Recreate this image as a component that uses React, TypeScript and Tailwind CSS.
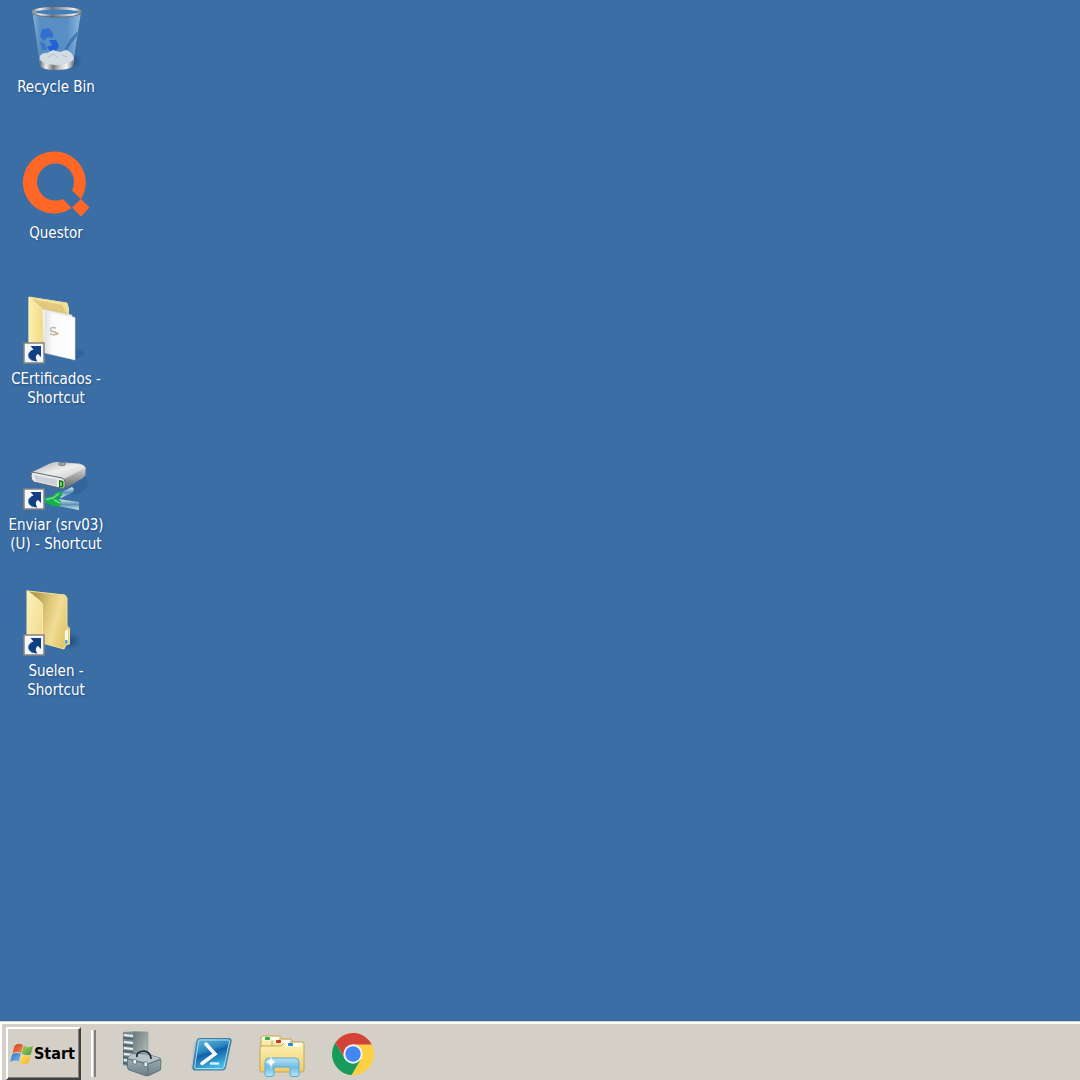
import type { ReactNode } from 'react';

function ShortcutArrow() {
  return (
    <g>
      <rect x="24" y="51" width="20" height="20" fill="#f4f8fb" stroke="#85837f" strokeWidth="1.5" />
      <path d="M30.500 54 H41 V65 L38 62 C35.500 63.500 35 66 37.500 69.500 C31 69 27.500 66 28.500 62 C29.200 59.500 31 58.500 33.500 57.500 Z" fill="#123f83" />
      <path d="M33 69 C29.500 67.500 28 65 28.500 62 C29 60.500 30 59.500 31.500 58.500" fill="none" stroke="#5b86bd" strokeWidth=".8" />
    </g>
  );
}

function RecycleBinIcon() {
  return (
    <svg viewBox="0 0 112 78" className="h-[78px] w-28" aria-hidden="true">
      <defs>
        <linearGradient id="binGlass" x1="0" x2="1" y1="0" y2="0">
          <stop offset="0" stopColor="#b9dcf5" stopOpacity=".65" />
          <stop offset=".15" stopColor="#79b0e0" stopOpacity=".5" />
          <stop offset=".7" stopColor="#74aee2" stopOpacity=".5" />
          <stop offset="1" stopColor="#b9dcf5" stopOpacity=".7" />
        </linearGradient>
        <linearGradient id="binBase" x1="0" x2="1" y1="0" y2="0">
          <stop offset="0" stopColor="#62676c" />
          <stop offset=".2" stopColor="#f2f2f2" />
          <stop offset=".4" stopColor="#77797b" />
          <stop offset=".6" stopColor="#c9cbcc" />
          <stop offset=".8" stopColor="#f5f5f5" />
          <stop offset="1" stopColor="#777b80" />
        </linearGradient>
        <linearGradient id="binRim" x1="0" x2="1" y1="0" y2="0">
          <stop offset="0" stopColor="#8d9194" />
          <stop offset=".15" stopColor="#e9ebec" />
          <stop offset=".4" stopColor="#6f7376" />
          <stop offset=".65" stopColor="#b5b8ba" />
          <stop offset=".85" stopColor="#f1f2f2" />
          <stop offset="1" stopColor="#777b80" />
        </linearGradient>
        <radialGradient id="binShadow">
          <stop offset="0" stopColor="#1f4a7d" stopOpacity=".8" />
          <stop offset="1" stopColor="#1f4a7d" stopOpacity="0" />
        </radialGradient>
      </defs>
      <ellipse cx="70" cy="61" rx="13" ry="9" fill="url(#binShadow)" />
      <path d="M32.500 12 L40 64 Q56 72 73 64 L81 12 Z" fill="url(#binGlass)" />
      <path d="M65 49 Q70 38 78 31 L77 36 Q71 43 67 50 Z" fill="#2c67a8" opacity=".7" />
      <path d="M42 29 L49 28 L53 33 L53 38 L48 37 L44 41 L40 36 Z" fill="#2867cf" opacity=".75" />
      <path d="M49 40 L56 40 L59 46 L56 51 L50 51 L47 47 L52 45 Z" fill="#1c5cdc" opacity=".9" />
      <path d="M40 42 L45 43 L47 50 L42 50 Z" fill="#2868c9" opacity=".6" />
      <path d="M39.500 58 Q40 53 47 53 L53 50 L60 52 L66 50 Q73 52 74 59 L73 64 Q56 70 40 64 Z" fill="#dfe4e7" opacity=".9" />
      <path d="M48 57 L54 54 L58 58 M62 55 L67 57" fill="none" stroke="#b9c3ca" strokeWidth="1" />
      <path d="M39.500 59 Q42 64.500 56 65 Q71 64.500 73.500 59 L73 66 Q70 70 56 70 Q42 70 40 66 Z" fill="url(#binBase)" />
      <ellipse cx="57" cy="12" rx="24" ry="3.800" fill="#3f7fbe" stroke="url(#binRim)" strokeWidth="2.500" />
      <path d="M33 13.500 Q38 17 57 17 Q76 17 81 13.500" fill="none" stroke="#4e555b" strokeWidth=".7" />
    </svg>
  );
}

function QuestorIcon() {
  return (
    <svg viewBox="0 0 112 78" className="h-[78px] w-28" aria-hidden="true">
      <path
        fillRule="evenodd"
        d="M54.500 5.500 A31 31 0 0 1 81 53 L72 44.500 A18.500 18.500 0 1 0 63 53 L71.500 62 A31 31 0 1 1 54.500 5.500 Z"
        fill="#ff6727"
      />
      <path d="M81 53 L89.500 61.500 L81 70.500 L72 61.500 Z" fill="#ff6727" />
    </svg>
  );
}

function CertificatesIcon() {
  return (
    <svg viewBox="0 0 112 78" className="h-[78px] w-28" aria-hidden="true">
      <defs>
        <linearGradient id="certBack" x1="0" x2="0" y1="0" y2="1">
          <stop offset="0" stopColor="#f6e7a3" />
          <stop offset="1" stopColor="#d9bb68" />
        </linearGradient>
        <linearGradient id="certFront" x1="0" x2="1" y1="0" y2="0">
          <stop offset="0" stopColor="#fcf0ae" />
          <stop offset="1" stopColor="#efd988" />
        </linearGradient>
        <linearGradient id="certPage" x1="0" x2="1" y1="0" y2="0">
          <stop offset="0" stopColor="#e3e1de" />
          <stop offset=".25" stopColor="#fafafa" />
          <stop offset="1" stopColor="#ffffff" />
        </linearGradient>
      </defs>
      <path d="M74 55 L85 61 L76 68 L68 68 Z" fill="#2d5f97" opacity=".7" />
      <path d="M29 5 L67 11 L68.500 16 V54 L44 60 L29 50 Z" fill="url(#certBack)" stroke="#eedf9e" />
      <path d="M32 7 L62 13 L67 22 L44 18 Z" fill="#cfae58" opacity=".45" />
      <path d="M42 17 L72 23 V65 L44 60 Z" fill="#f3f2f0" stroke="#c7c5bf" strokeWidth=".6" />
      <path d="M45 19 L75 25.500 V68 L45 61 Z" fill="url(#certPage)" stroke="#e2e2e2" strokeWidth=".6" />
      <path d="M29 5 L41 17 Q43 19 43 23 V61 L29 57 Z" fill="url(#certFront)" stroke="#f8edb4" strokeWidth=".8" />
      <path d="M56 36 Q50 34.500 50.500 38 Q51 39.500 55 40 Q58 42 54 43 L50 42" fill="none" stroke="#bdbab5" strokeWidth="1.600" />
      <circle cx="57" cy="41.500" r="1.500" fill="#e0ad65" />
      <ShortcutArrow />
    </svg>
  );
}

function NetworkDriveIcon() {
  return (
    <svg viewBox="0 0 112 78" className="h-[78px] w-28" aria-hidden="true">
      <defs>
        <linearGradient id="driveTop" x1="0" x2="1" y1="0" y2="1">
          <stop offset="0" stopColor="#a9abad" />
          <stop offset=".5" stopColor="#eeeeee" />
          <stop offset="1" stopColor="#c3c4c5" />
        </linearGradient>
        <linearGradient id="driveSide" x1="0" x2="0" y1="0" y2="1">
          <stop offset="0" stopColor="#cfcfcf" />
          <stop offset="1" stopColor="#67696b" />
        </linearGradient>
        <linearGradient id="cable" x1="0" x2="0" y1="0" y2="1">
          <stop offset="0" stopColor="#d8eef2" />
          <stop offset=".5" stopColor="#5d93b4" />
          <stop offset="1" stopColor="#d4ebef" />
        </linearGradient>
      </defs>
      <path d="M66 51 L86 39 L88 47 Q86 54 74 57 Z" fill="#295789" opacity=".4" />
      <path d="M31 35 L50 26 Q53 24.500 57 24.500 L79 26 Q85 27 85.500 31 L65 41 Z" fill="url(#driveTop)" stroke="#d8d9d9" strokeWidth=".8" />
      <ellipse cx="62" cy="26" rx="3.500" ry="1.700" fill="#a0a2a3" stroke="#66696b" strokeWidth=".7" />
      <path d="M64 41 L85.500 30 V36 Q85 39 81 41 L66 50 Z" fill="url(#driveSide)" />
      <path d="M32 34 L62 40 Q65 41 65 44 V48 Q65 51 62 50.500 L34 44 Q31 42 31 38 Z" fill="#e9ebed" stroke="#64676a" strokeWidth="1" />
      <path d="M34 37 L57 41.500 V48 L36 43 Z" fill="#cbd0da" />
      <path d="M59 42 L63.500 43 V49.500 H59 Z" fill="#12711a" />
      <rect x="60" y="44" width="2" height="4" fill="#58e13e" />
      <path d="M58 56 L72 49 L74 51 L73 54 L61 60 Z" fill="url(#cable)" />
      <path d="M58 61 L79 64 V72 L58 68 Z" fill="url(#cable)" />
      <path d="M45 60 L52 58 L57 54 L62 53 L62 58 L57 60 L61 63 L60 69 L52 68 L45 64 Z" fill="#18ad4d" />
      <path d="M46 61.500 L53 60 L59 55.500 M54 62 L60 65" stroke="#6de08c" strokeWidth="1.500" fill="none" />
      <ShortcutArrow />
    </svg>
  );
}

function FolderIcon() {
  return (
    <svg viewBox="0 0 112 78" className="h-[78px] w-28" aria-hidden="true">
      <defs>
        <linearGradient id="folderBack" x1="0" x2="1" y1="0" y2=".4">
          <stop offset=".2" stopColor="#b69d57" />
          <stop offset=".5" stopColor="#dcc575" />
          <stop offset=".75" stopColor="#f0dd96" />
          <stop offset="1" stopColor="#e5c96f" />
        </linearGradient>
        <linearGradient id="folderFront" x1="0" x2="1" y1="0" y2="1">
          <stop offset="0" stopColor="#fcf2ba" />
          <stop offset="1" stopColor="#f0da8c" />
        </linearGradient>
        <radialGradient id="folderShadow">
          <stop offset="0" stopColor="#173c68" stopOpacity=".7" />
          <stop offset="1" stopColor="#173c68" stopOpacity="0" />
        </radialGradient>
      </defs>
      <ellipse cx="69" cy="57" rx="13" ry="9" fill="url(#folderShadow)" />
      <path d="M28 7 L65 11 L67 14 V42 L69.500 44 V60 L66 61 L64 65 L42 59 Z" fill="url(#folderBack)" stroke="#f0e09a" />
      <path d="M27 6.500 L40 17 Q42.500 19 42.500 22 V60 L27 56 Z" fill="url(#folderFront)" stroke="#f9ebb0" />
      <path d="M64.500 46.500 L68.500 44.500 V59 L64.500 60 Z" fill="#fbf8e3" stroke="#d7bf70" strokeWidth=".6" />
      <rect x="65" y="56" width="2.500" height="3.500" fill="#4aa4df" />
      <ShortcutArrow />
    </svg>
  );
}

function WindowsLogo() {
  return (
    <svg viewBox="0 0 24 22" className="h-[22px] w-6 shrink-0" aria-hidden="true">
      <defs>
        <linearGradient id="flagRed" x1="0" x2="1" y1="0" y2="1">
          <stop offset="0" stopColor="#d8381c" />
          <stop offset="1" stopColor="#f58b4c" />
        </linearGradient>
        <linearGradient id="flagGreen" x1="0" x2="1" y1="0" y2="1">
          <stop offset="0" stopColor="#a3cf6e" />
          <stop offset="1" stopColor="#4c9a2a" />
        </linearGradient>
        <linearGradient id="flagBlue" x1="0" x2="1" y1="0" y2="1">
          <stop offset="0" stopColor="#2c6dc4" />
          <stop offset="1" stopColor="#7fc0ef" />
        </linearGradient>
        <linearGradient id="flagYellow" x1="0" x2="1" y1="0" y2="1">
          <stop offset="0" stopColor="#fde37a" />
          <stop offset="1" stopColor="#f5b016" />
        </linearGradient>
      </defs>
      <path d="M4.500 3 Q8 -1 13 2 L11 10 Q7 8 2.500 10.500 Z" fill="url(#flagRed)" />
      <path d="M13.800 2.500 Q18 5.500 23 3 L20.800 11.500 Q16 13.500 11.700 10.500 Z" fill="url(#flagGreen)" />
      <path d="M2.200 11.500 Q6.500 9 10.800 11 L8.800 18.500 Q5 16.500 0 19 Z" fill="url(#flagBlue)" />
      <path d="M11.500 11.500 Q15.500 14.500 20.600 12.500 L18.500 20 Q13.500 23 9.500 19 Z" fill="url(#flagYellow)" />
    </svg>
  );
}

function ServerManagerIcon() {
  return (
    <svg viewBox="0 0 48 48" className="size-12" aria-hidden="true">
      <defs>
        <linearGradient id="serverSide" x1="0" x2="1" y1="0" y2="1">
          <stop offset="0" stopColor="#657579" />
          <stop offset=".6" stopColor="#a2aca8" />
          <stop offset="1" stopColor="#bfc5c1" />
        </linearGradient>
        <linearGradient id="toolbox" x1="0" x2="0" y1="0" y2="1">
          <stop offset="0" stopColor="#a7b5ba" />
          <stop offset=".5" stopColor="#8b9ca3" />
          <stop offset="1" stopColor="#6c7f87" />
        </linearGradient>
      </defs>
      <path d="M7 2 L17 1.500 V38 L7 35 Z" fill="#7a8c93" />
      <path d="M17 1.500 L32 2 V35 L17 38 Z" fill="url(#serverSide)" stroke="#8b9795" strokeWidth=".6" />
      <path d="M8 5 L17 6 M8 12 L17 13 M8 18 L17 19 M8 24 L17 25 M8 30 L17 31" stroke="#eef2f3" strokeWidth="2" />
      <path d="M7 8 L17 9 M7 15 L17 16 M7 21 L17 22 M7 27 L17 28 M7 33 L14 34" stroke="#49616b" strokeWidth="1.500" />
      <path d="M11.500 28 L16 23.500 L30 24 L44 28 L45 31 L44.500 40 L33 45.500 Q31 46 29 45.500 L13 40 Q11.500 39 11.500 37 Z" fill="url(#toolbox)" stroke="#566970" strokeWidth=".8" />
      <path d="M12 28 L16 24 L30 24.500 L44 28 L33 33 Z" fill="#b7c3c7" />
      <path d="M12 29 L32 34 L44.500 29.500 M32 34 V45" stroke="#5b7078" fill="none" />
      <path d="M21 27 Q20 23 25 21.500 Q29 20.500 31 22 Q35 24 35 29" stroke="#252e34" strokeWidth="1.800" fill="none" />
      <rect x="17" y="29.500" width="3.500" height="4.500" rx="1.200" fill="#eef2f3" stroke="#526067" strokeWidth=".7" />
      <rect x="28" y="32" width="3.500" height="4.500" rx="1.200" fill="#eef2f3" stroke="#526067" strokeWidth=".7" />
    </svg>
  );
}

function PowerShellIcon() {
  return (
    <svg viewBox="0 0 48 48" className="size-12" aria-hidden="true">
      <defs>
        <linearGradient id="psBlue" x1="0" x2=".4" y1="0" y2="1">
          <stop offset="0" stopColor="#6fc0e2" />
          <stop offset=".45" stopColor="#2c86bf" />
          <stop offset=".55" stopColor="#1262a8" />
          <stop offset="1" stopColor="#45b9e4" />
        </linearGradient>
      </defs>
      <path d="M7 12 H11 L7 39 H4 Z" fill="#9bbfd1" opacity=".6" />
      <path
        d="M13 8.500 H41.500 Q44.500 8.500 44 11.500 L38.500 37 Q38 40 35 40 H8.500 Q5.500 40 6 37 L10 11 Q10.500 8.500 13 8.500 Z"
        fill="url(#psBlue)"
        stroke="#4a7f99"
        strokeWidth="1.200"
      />
      <path d="M13 10 H41 Q42.800 10 42.400 12 L37 37 Q36.500 38.500 34.500 38.500 H9 Q7.300 38.500 7.700 36.500 L11.500 11.500 Q11.800 10 13 10 Z" fill="none" stroke="#a9def0" strokeWidth="1" />
      <path d="M19 14 L28 24 L15 33.500" stroke="#f8fcff" strokeWidth="3.500" strokeLinecap="round" fill="none" />
      <path d="M24 33.500 H31" stroke="#d5f1fc" strokeWidth="2.500" strokeLinecap="round" />
    </svg>
  );
}

function ExplorerIcon() {
  return (
    <svg viewBox="0 0 48 48" className="size-12" aria-hidden="true">
      <defs>
        <linearGradient id="exYellow" x1="0" x2="0" y1="0" y2="1">
          <stop offset="0" stopColor="#fff3b8" />
          <stop offset="1" stopColor="#edcd69" />
        </linearGradient>
        <linearGradient id="exBlue" x1="0" x2="0" y1="0" y2="1">
          <stop offset="0" stopColor="#b9e2f4" />
          <stop offset=".5" stopColor="#71bce4" />
          <stop offset="1" stopColor="#b5e6f6" />
        </linearGradient>
      </defs>
      <path d="M3 38 V8 Q3 6 5 6 H22 L25 10 V38 Z" fill="url(#exYellow)" stroke="#c5a557" />
      <path d="M14 30 V11 Q14 9 16 9 H33 L35 12 V36 H14 Z" fill="#f9e7a0" stroke="#c5a557" />
      <path d="M2 18 Q2 16 4 16 H23 L27 12 H44 Q46 12 46 14 V40 Q46 42 44 42 H4 Q2 42 2 40 Z" fill="url(#exYellow)" stroke="#c5a557" />
      <rect x="4" y="7" width="17" height="3.500" rx="1" fill="#fffdf2" />
      <rect x="16" y="10" width="16" height="3" rx="1" fill="#fffdf2" />
      <rect x="28" y="13" width="16" height="3.500" rx="1" fill="#fffdf2" />
      <rect x="7" y="7" width="5" height="3" rx="1" fill="#20b83c" />
      <rect x="18" y="10" width="5" height="3" rx="1" fill="#d32d21" />
      <rect x="30" y="13" width="5" height="3" rx="1" fill="#1889df" />
      <path
        d="M9 46.500 Q7 46.500 7 44.500 V32 Q7 28 11 28 H37 Q41 28 41 32 V44.500 Q41 46.500 39 46.500 H34 Q32 46.500 32 44.500 V37 H16 V44.500 Q16 46.500 14 46.500 Z"
        fill="url(#exBlue)"
        stroke="#5fa8cf"
      />
      <path d="M13 24 L14 31 L19 32 L14 33 L13 40 L12 33 L6 32 L12 31 Z" fill="#fff" opacity=".85" />
      <circle cx="13" cy="32" r="3" fill="#fff" opacity=".7" />
    </svg>
  );
}

function ChromeIcon() {
  return (
    <svg viewBox="0 0 48 48" className="size-12" aria-hidden="true">
      <circle cx="24" cy="24" r="21" fill="#fed043" />
      <path d="M6.500 12.500 A21 21 0 0 0 22.500 45 L32.200 28.800 L24 24 L15.800 28.800 Z" fill="#169b5c" />
      <path d="M6.500 12.500 A21 21 0 0 1 42.700 14.500 H24 L15.800 28.500 Z" fill="#d3433a" />
      <circle cx="24" cy="24" r="9.700" fill="#f1f1f1" />
      <circle cx="24" cy="24" r="7.700" fill="#4487f3" />
    </svg>
  );
}

type DesktopItem = { label: string; icon: ReactNode; lines: string[] };

const DESKTOP_ITEMS: DesktopItem[] = [
  { label: 'Recycle Bin', icon: <RecycleBinIcon />, lines: ['Recycle Bin'] },
  { label: 'Questor', icon: <QuestorIcon />, lines: ['Questor'] },
  { label: 'CErtificados - Shortcut', icon: <CertificatesIcon />, lines: ['CErtificados -', 'Shortcut'] },
  { label: 'Enviar (srv03) (U) - Shortcut', icon: <NetworkDriveIcon />, lines: ['Enviar (srv03)', '(U) - Shortcut'] },
  { label: 'Suelen - Shortcut', icon: <FolderIcon />, lines: ['Suelen -', 'Shortcut'] },
];

const PINNED = [
  { name: 'Server Manager', icon: <ServerManagerIcon /> },
  { name: 'Windows PowerShell', icon: <PowerShellIcon /> },
  { name: 'Windows Explorer', icon: <ExplorerIcon /> },
  { name: 'Google Chrome', icon: <ChromeIcon /> },
];

export default function App() {
  return (
    <div className="flex min-h-screen flex-col bg-[#3a6ea5] font-['DejaVu_Sans_Condensed','Noto_Sans',sans-serif]">
      <main className="flex-1">
        <ul className="flex w-28 flex-col">
          {DESKTOP_ITEMS.map(item => (
            <li key={item.label} className="h-[146px]">
              <button
                aria-label={item.label}
                className="flex w-full flex-col items-center text-[15px] leading-[19px] whitespace-nowrap text-white first-line:text-white [text-shadow:1px_1px_2px_#254f80]"
              >
                {item.icon}
                {item.lines.map(line => (
                  <span key={line}>{line}</span>
                ))}
              </button>
            </li>
          ))}
        </ul>
      </main>

      <footer className="border-t border-[#d4d0c8] bg-[#d4d0c8]">
        <div className="flex h-[58px] items-stretch border-t-2 border-l-2 border-white pt-[3px] pl-1">
          <button className="flex w-[75px] items-center border-2 border-t-white border-r-[#404040] border-b-[#404040] border-l-white pl-[2px] text-base font-bold text-black shadow-[inset_-1px_-1px_0_#808080]">
            <WindowsLogo />
            Start
          </button>
          <div className="my-[3px] ml-[10px] w-[5px] border-r-2 border-l-2 border-r-[#808080] border-l-white" />
          <nav className="ml-5 flex items-center gap-[23px]" aria-label="Quick launch">
            {PINNED.map(app => (
              <button key={app.name} aria-label={app.name}>
                {app.icon}
              </button>
            ))}
          </nav>
        </div>
      </footer>
    </div>
  );
}
